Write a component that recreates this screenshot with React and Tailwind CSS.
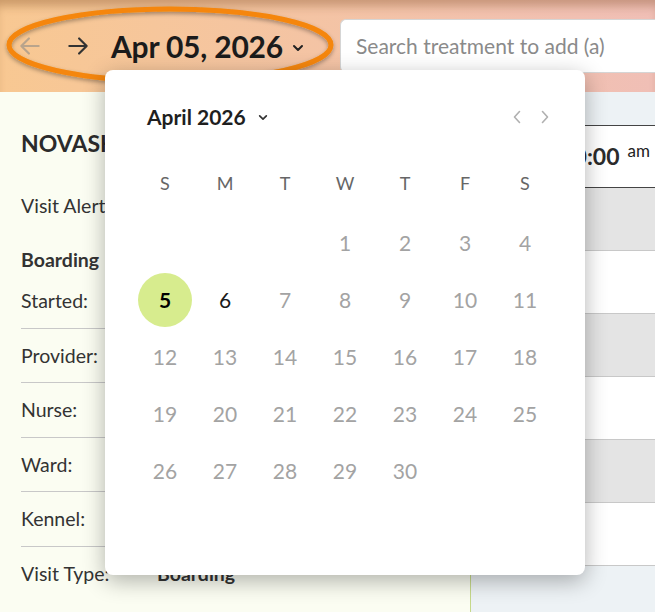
import React from 'react';

const days = [
  null, null, null, 1, 2, 3, 4,
  5, 6, 7, 8, 9, 10, 11,
  12, 13, 14, 15, 16, 17, 18,
  19, 20, 21, 22, 23, 24, 25,
  26, 27, 28, 29, 30, null, null,
];

const rows = ['Started:', 'Provider:', 'Nurse:', 'Ward:', 'Kennel:'];

const Chevron = ({ className }) => (
  <svg viewBox="0 0 12 8" className={className} fill="none" stroke="currentColor" strokeWidth="2" strokeLinecap="round" strokeLinejoin="round">
    <path d="M2 2l4 4 4-4" />
  </svg>
);

const App = () => {
  return (
    <div className="relative w-[655px] h-[612px] overflow-hidden font-['Lato',sans-serif] text-[#333]">
      {/* header */}
      <div className="relative h-[92px] flex items-center bg-gradient-to-r from-[#f8c892] to-[#f0bfb6] shadow-[inset_0_10px_10px_-4px_rgba(120,70,30,0.35)]">
        <div className="flex items-center pl-[17px] w-[340px]">
          <svg viewBox="0 0 24 24" className="w-[26px] h-[26px] text-[#b9a48c]" fill="none" stroke="currentColor" strokeWidth="2" strokeLinecap="round" strokeLinejoin="round">
            <path d="M20 12H4M11 5l-7 7 7 7" />
          </svg>
          <svg viewBox="0 0 24 24" className="ml-[22px] w-[26px] h-[26px] text-[#333]" fill="none" stroke="currentColor" strokeWidth="2" strokeLinecap="round" strokeLinejoin="round">
            <path d="M4 12h16M13 5l7 7-7 7" />
          </svg>
          <span className="ml-[20px] text-[30px] font-bold text-[#1b1b1b] tracking-[-0.2px]">Apr 05, 2026</span>
          <Chevron className="ml-[9px] mt-[4px] w-[12px] h-[8px] text-[#222]" />
        </div>
        <div className="flex-1 h-[54px] bg-white rounded-l-md border border-[#d5d5d5] border-r-0 flex items-center pl-[15px] text-[21px] text-[#8a8a8a]">
          Search treatment to add (a)
        </div>
      </div>

      {/* body */}
      <div className="flex h-[520px]">
        <div className="w-[471px] bg-[#fbfdf2] border-r border-[#c6d98a] pl-[21px] pr-[20px]">
          <div className="mt-[34px] text-[23px] font-bold text-[#2b2b2b]">NOVASHAUN</div>
          <div className="mt-[30px] text-[19.5px]">Visit Alerts:</div>
          <div className="mt-[25px] text-[19.5px] font-bold">Boarding</div>
          {rows.map((r) => (
            <div key={r} className="h-[54.5px] flex items-center border-b border-[#c8c8c8] text-[19.5px]">{r}</div>
          ))}
          <div className="h-[54px] flex items-center text-[19.5px]">
            <span className="w-[136px]">Visit Type:</span>
            <span className="font-bold">Boarding</span>
          </div>
        </div>
        <div className="flex-1 bg-[#edf2f5] flex flex-col">
          <div className="h-[33px]" />
          <div className="h-[63px] bg-white border-t border-b border-[#444] flex items-center justify-end pr-[5px]">
            <span className="text-[23px] font-bold text-[#2b2b2b]">10:00</span>
            <span className="ml-[8px] mb-[12px] text-[17px] text-[#222]">am</span>
          </div>
          {[0, 1, 2, 3, 4, 5].map((i) => (
            <div key={i} className={`h-[63px] border-b border-[#c8c8c8] ${i % 2 === 0 ? 'bg-[#e4e4e4]' : 'bg-white'}`} />
          ))}
        </div>
      </div>

      {/* highlight ellipse */}
      <svg className="absolute left-0 top-0 w-[345px] h-[92px] pointer-events-none" viewBox="0 0 345 92">
        <defs>
          <filter id="sh" x="-10%" y="-30%" width="120%" height="160%">
            <feDropShadow dx="0" dy="2" stdDeviation="2" floodColor="#000" floodOpacity="0.35" />
          </filter>
        </defs>
        <ellipse cx="170" cy="45" rx="161" ry="36" fill="none" stroke="#f5860a" strokeWidth="5" filter="url(#sh)" />
      </svg>

      {/* date picker popover */}
      <div className="absolute left-[105px] top-[70px] w-[480px] h-[505px] bg-white rounded-lg shadow-[0_6px_22px_rgba(0,0,0,0.3)]">
        <div className="flex items-center justify-between pl-[42px] pr-[36px] pt-[31px]">
          <div className="flex items-center">
            <span className="text-[21px] font-bold text-[#1f1f1f]">April 2026</span>
            <Chevron className="ml-[12px] mt-[2px] w-[10px] h-[7px] text-[#333]" />
          </div>
          <div className="flex items-center gap-[20px] text-[#b0b0b0]">
            <svg viewBox="0 0 8 14" className="w-[8px] h-[14px]" fill="none" stroke="currentColor" strokeWidth="1.6" strokeLinecap="round" strokeLinejoin="round">
              <path d="M6.5 1.5L1.5 7l5 5.5" />
            </svg>
            <svg viewBox="0 0 8 14" className="w-[8px] h-[14px]" fill="none" stroke="currentColor" strokeWidth="1.6" strokeLinecap="round" strokeLinejoin="round">
              <path d="M1.5 1.5L6.5 7l-5 5.5" />
            </svg>
          </div>
        </div>
        <div className="grid grid-cols-7 px-[30px] mt-[36px]">
          {['S', 'M', 'T', 'W', 'T', 'F', 'S'].map((d, i) => (
            <div key={i} className="h-[30px] flex items-center justify-center text-[18px] text-[#666]">{d}</div>
          ))}
        </div>
        <div className="grid grid-cols-7 px-[30px] mt-[16px]">
          {days.map((d, i) => (
            <div key={i} className="h-[57px] flex items-center justify-center">
              {d === 5 ? (
                <span className="w-[54px] h-[54px] rounded-full bg-[#d7ec8e] flex items-center justify-center text-[21px] font-bold text-black">5</span>
              ) : d ? (
                <span className={`text-[21px] ${d === 6 ? 'text-[#1a1a1a]' : 'text-[#a3a3a3]'}`}>{d}</span>
              ) : null}
            </div>
          ))}
        </div>
      </div>
    </div>
  );
};

export default App;
